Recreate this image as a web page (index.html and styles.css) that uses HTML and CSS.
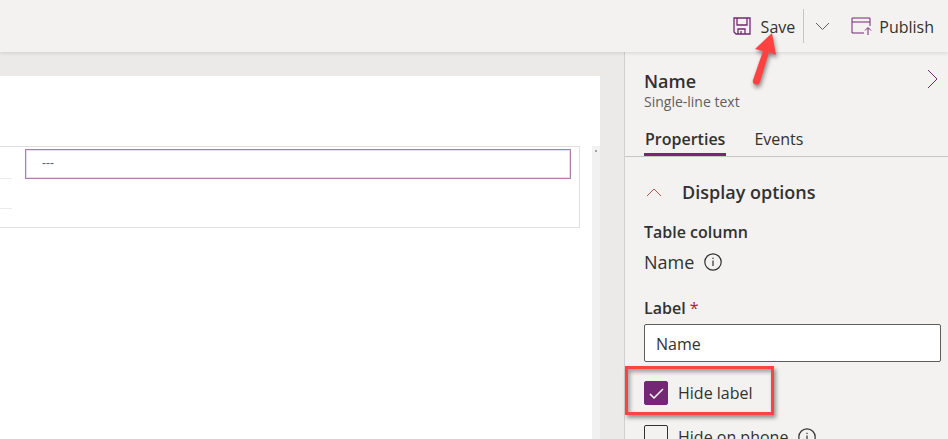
FILE: index.html
```html
<!DOCTYPE html>
<html lang="en">
<head>
<meta charset="utf-8">
<title>Form designer</title>
<link rel="stylesheet" href="styles.css">
</head>
<body>
<header class="toolbar">
  <div class="save-group">
    <button class="command" type="button">
      <svg class="icon-save" width="18" height="18" viewBox="0 0 18 18" aria-hidden="true">
        <path d="M1 1H17V17H3L1 15Z M4 1V8H14V1 M5 17V12H12V17 M8 14V17"/>
      </svg>
      <span>Save</span>
    </button>
    <svg class="pointer" width="40" height="64" viewBox="0 0 40 64" aria-hidden="true">
      <path d="M25 5L29 27L22 24L13 54A3 3 0 0 1 6 52L16 23L8 21Z"/>
    </svg>
  </div>
  <button class="more" type="button" aria-label="More save options">
    <svg width="15" height="9" viewBox="0 0 15 9" aria-hidden="true"><path d="M1 1L7.5 7.5L14 1"/></svg>
  </button>
  <button class="command publish" type="button">
    <svg width="21" height="18" viewBox="0 0 21 18" aria-hidden="true">
      <path d="M13 16H1V1H19V9 M1 5H19 M17 18V11 M14 13.5L17 10.500L20 13.500"/>
    </svg>
    <span>Publish</span>
  </button>
</header>
<div class="workspace">
  <main class="canvas">
    <div class="page">
      <div class="form-area">
        <section class="form-section">
          <div class="labels"><div class="row-line"></div><div class="row-line"></div></div>
          <input class="field" type="text" value="---" readonly aria-label="Name value">
        </section>
      </div>
      <div class="scroll-track"><div class="scroll-mark"></div></div>
    </div>
  </main>
  <aside class="panel">
    <div class="panel-head">
      <div>
        <h1>Name</h1>
        <p class="kind">Single-line text</p>
      </div>
      <button class="collapse" type="button" aria-label="Collapse panel">
        <svg width="12" height="20" viewBox="0 0 12 20" aria-hidden="true"><path d="M1 1L10 10L1 19"/></svg>
      </button>
    </div>
    <nav class="tabs">
      <button class="tab selected" type="button">Properties</button>
      <button class="tab" type="button">Events</button>
    </nav>
    <div class="properties">
      <button class="group" type="button">
        <svg width="16" height="9" viewBox="0 0 16 9" aria-hidden="true"><path d="M1 8L8 1L15 8"/></svg>
        <span>Display options</span>
      </button>
      <h2>Table column</h2>
      <p class="column-name">Name
        <svg class="info" width="18" height="18" viewBox="0 0 18 18" aria-hidden="true"><circle cx="9" cy="9" r="8.200"/><path d="M9 7.500V13 M9 4.700V6"/></svg>
      </p>
      <label class="caption" for="label">Label <span class="required">*</span></label>
      <input class="text-box" id="label" type="text" value="Name">
      <div class="option callout">
        <span class="check">
          <input type="checkbox" id="hide-label" checked>
          <svg width="24" height="24" viewBox="0 0 24 24" aria-hidden="true"><path d="M6 13L10 17L19 8"/></svg>
        </span>
        <label for="hide-label">Hide label</label>
      </div>
      <div class="option">
        <span class="check"><input type="checkbox" id="hide-phone"></span>
        <label for="hide-phone">Hide on phone</label>
        <svg class="info" width="18" height="18" viewBox="0 0 18 18" aria-hidden="true"><circle cx="9" cy="9" r="8.200"/><path d="M9 7.500V13 M9 4.700V6"/></svg>
      </div>
    </div>
  </aside>
</div>
</body>
</html>
```

FILE: styles.css
```css
* { box-sizing: border-box; }

body {
  margin: 0;
  height: 100vh;
  overflow: hidden;
  display: flex;
  flex-direction: column;
  background: #f3f2f1;
  color: #323130;
  font: 16px/24px "Open Sans", "Noto Sans", sans-serif;
}

h1, h2, p { margin: 0; }

button {
  padding: 0;
  border: 0;
  background: none;
  color: inherit;
  font: inherit;
}

svg {
  flex: none;
  fill: none;
  stroke: #742774;
}

.toolbar {
  position: relative;
  z-index: 1;
  flex: none;
  height: 52px;
  padding-right: 14px;
  display: flex;
  justify-content: flex-end;
  align-items: center;
  background: #f3f2f1;
  box-shadow: 0 1px 4px rgba(0, 0, 0, 0.12);
}

.save-group { position: relative; }

.command {
  display: flex;
  align-items: center;
  gap: 10px;
}

.command span { padding-top: 2px; }

.save-group .command {
  height: 34px;
  padding-right: 8px;
}

.icon-save { stroke-width: 1.3; }

.pointer {
  position: absolute;
  left: 14px;
  top: 19px;
  fill: #fe4141;
  stroke: none;
  filter: drop-shadow(1px 3px 2px rgba(0, 0, 0, 0.45));
}

.more {
  display: flex;
  align-items: center;
  height: 34px;
  padding: 0 21px 0 11px;
  border-left: 1px solid #c8c6c4;
}

.more svg { stroke: #605e5c; }

.publish { gap: 7px; }

.workspace {
  flex: 1;
  min-height: 0;
  display: flex;
}

.canvas {
  flex: 1;
  display: flex;
  padding: 24px 24px 0 0;
  background: #ebeae9;
}

.page {
  flex: 1;
  display: flex;
  padding-top: 70px;
  background: #fff;
}

.form-area {
  flex: 1;
  padding-right: 12px;
}

.form-section {
  display: flex;
  gap: 13px;
  height: 82px;
  padding: 2px 8px 0 0;
  border: 1px solid #e1dfdd;
  border-left: 0;
}

.labels { width: 12px; }

.row-line {
  height: 30px;
  border-bottom: 1px solid #edebe9;
}

.field {
  flex: 1;
  height: 30px;
  padding: 0 16px 2px;
  border: 1px solid #ad7dad;
  outline: 1px solid #eadcea;
  outline-offset: -2px;
  background: #fff;
  color: #605e5c;
  font: 12px/16px "Liberation Sans", sans-serif;
}

.scroll-track {
  width: 8px;
  padding: 4px 3px;
  background: #f1f1f1;
}

.scroll-mark {
  width: 2px;
  height: 2px;
  background: #a3a3a3;
}

.panel {
  width: 324px;
  border-left: 1px solid #d2d0ce;
}

.panel-head {
  display: flex;
  justify-content: space-between;
  align-items: flex-start;
  padding: 17px 9px 0 19px;
}

h1 {
  font-size: 18px;
  font-weight: 600;
  line-height: 24px;
}

.kind {
  color: #605e5c;
  font-size: 14px;
  line-height: 18px;
}

.collapse { display: flex; }

.tabs {
  display: flex;
  gap: 26px;
  height: 46px;
  padding-left: 19px;
  border-bottom: 1px solid #c8c6c4;
}

.tab {
  padding: 14px 2px 0;
  border-bottom: 3px solid transparent;
}

.tab.selected {
  padding: 14px 1px 0;
  border-color: #742774;
  font-weight: 600;
}

.properties { padding: 23px 7px 0 19px; }

.group {
  display: flex;
  align-items: center;
  gap: 20px;
  padding-left: 2px;
  font-size: 18px;
  font-weight: 600;
}

.group svg { stroke: #a4574b; }

h2, .caption {
  font-size: 16px;
  font-weight: 600;
  line-height: 24px;
}

h2 { margin-top: 16px; }

.column-name {
  display: flex;
  align-items: center;
  gap: 10px;
  margin: 6px 0 22px;
  font-size: 18px;
}

.info { stroke: #323130; stroke-width: 1.2; }

.caption { display: block; }

.required {
  color: #a4262c;
  font-weight: 400;
}

.text-box {
  display: block;
  width: 100%;
  height: 38px;
  margin: 4px 0;
  padding: 2px 11px 0;
  border: 1px solid #605e5c;
  border-radius: 2px;
  background: #fff;
  color: inherit;
  font: inherit;
}

.option {
  display: flex;
  align-items: center;
  gap: 10px;
  height: 44px;
}

.callout {
  width: 149px;
  height: 49px;
  margin-left: -19px;
  padding: 5px 0 0 16px;
  border: 3px solid #fa4343;
  box-shadow: 2px 3px 4px rgba(0, 0, 0, 0.4), inset 2px 3px 4px rgba(0, 0, 0, 0.35);
}

.check {
  display: grid;
  flex: none;
}

.check > * { grid-area: 1 / 1; }

.check input {
  appearance: none;
  width: 24px;
  height: 24px;
  margin: 0;
  border: 1px solid #323130;
  border-radius: 2px;
}

.check input:checked {
  border-color: #742774;
  background: #742774;
}

.check svg {
  pointer-events: none;
  stroke: #fff;
  stroke-width: 1.5;
}
```
